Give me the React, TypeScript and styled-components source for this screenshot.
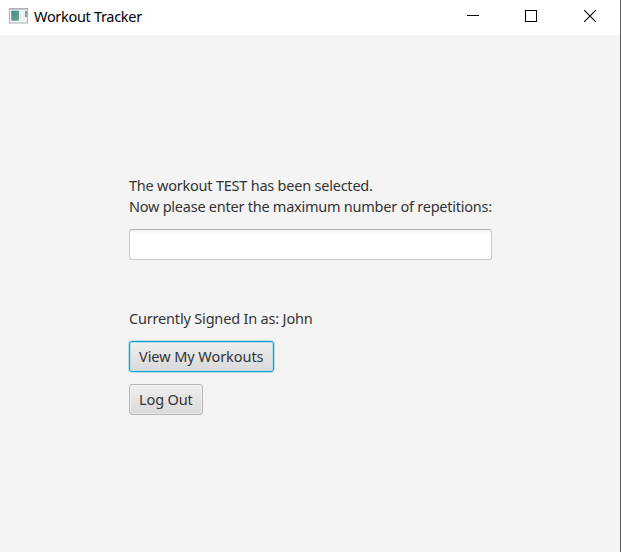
import React from "react";
import styled, { createGlobalStyle } from "styled-components";

const GlobalStyle = createGlobalStyle`
  * { box-sizing: border-box; }
  body { margin: 0; background: #f4f4f4; font-family: "Noto Sans", "Open Sans", sans-serif; }
`;

const Window = styled.div`
  width: 621px;
  height: 552px;
  display: flex;
  flex-direction: column;
  background: #f4f4f4;
  border-right: 1px solid #5b5b5b;
  overflow: hidden;
`;

const TitleBar = styled.header`
  height: 35px;
  flex: none;
  display: flex;
  align-items: stretch;
  background: #fff;
  padding-left: 9px;
`;

const AppIcon = styled.svg`
  width: 20px;
  height: 17px;
  margin: 7px 5px 0 0;
`;

const Title = styled.span<{ $spacing: number }>`
  flex: 1;
  font-size: 14.5px;
  line-height: 33px;
  color: #000;
  white-space: nowrap;
  letter-spacing: ${(p) => p.$spacing}px;
`;

const CaptionButton = styled.button`
  width: 58px;
  padding: 0;
  border: 0;
  background: transparent;
  display: flex;
  svg { width: 58px; height: 35px; display: block; }
`;

const Controls = styled.div`
  display: flex;
  width: 176px;
`;

const Content = styled.main`
  width: 363px;
  margin: 140px 0 0 129px;
  display: flex;
  flex-direction: column;
  align-items: flex-start;
`;

const Label = styled.div<{ $spacing: number }>`
  height: 21px;
  font-size: 14.5px;
  line-height: 21px;
  color: #333;
  white-space: nowrap;
  letter-spacing: ${(p) => p.$spacing}px;
`;

const TextField = styled.input`
  width: 363px;
  height: 31px;
  margin: 12px 0 48px;
  padding: 0 9px;
  border: 1px solid #c8c8c8;
  border-top-color: #b5b5b5;
  border-radius: 3px;
  background: linear-gradient(#f1f1f1, #fff 4px);
  outline: none;
  font: 14.5px "Noto Sans", sans-serif;
`;

const Button = styled.button<{ $focused?: boolean; $width: number; $spacing: number }>`
  width: ${(p) => p.$width}px;
  height: 31px;
  margin-top: 12px;
  padding: 0 0 0 9px;
  text-align: left;
  border: 1px solid ${(p) => (p.$focused ? "#159fc9" : "#b5b5b5")};
  border-radius: 3px;
  background: linear-gradient(#efefef, #d9d9d9);
  box-shadow: ${(p) =>
    p.$focused
      ? "0 0 0 1px rgba(3,158,211,.25), inset 0 0 0 1px #b5dfeb"
      : "inset 0 0 0 1px rgba(255,255,255,.4)"};
  color: #333;
  font: 14.5px/29px "Noto Sans", "Open Sans", sans-serif;
  letter-spacing: ${(p) => p.$spacing}px;
  white-space: nowrap;
`;

export default function App() {
  return (
    <>
      <GlobalStyle />
      <Window>
        <TitleBar>
          <AppIcon viewBox="0 0 20 17">
            <defs>
              <linearGradient id="pane" x1="0" y1="0" x2="1" y2="1">
                <stop offset="0" stopColor="#4b8095" />
                <stop offset="1" stopColor="#63b084" />
              </linearGradient>
            </defs>
            <rect x=".5" y="1.5" width="18" height="14.5" fill="#f3f5f7" stroke="#a9afb7" />
            <path d="M1 2.5h17" stroke="#c9cdd3" />
            <rect x="2.3" y="3.7" width="7.7" height="10" fill="url(#pane)" />
            <path d="M11.5 4v9" stroke="#e6eaec" />
            <path d="M16.9 4v6" stroke="#68a39a" strokeWidth="1.8" />
          </AppIcon>
          <Title $spacing={-0.31}>Workout Tracker</Title>
          <Controls>
            <CaptionButton aria-label="Minimize">
              <svg viewBox="0 0 58 35" shapeRendering="crispEdges">
                <path d="M23 15.5h12" stroke="#000" />
              </svg>
            </CaptionButton>
            <CaptionButton aria-label="Maximize">
              <svg viewBox="0 0 58 35" shapeRendering="crispEdges">
                <rect x="23.5" y="10.5" width="11" height="11" fill="none" stroke="#000" />
              </svg>
            </CaptionButton>
            <CaptionButton aria-label="Close">
              <svg viewBox="0 0 58 35">
                <path d="M24.2 10.2l11.6 11.6M35.8 10.2L24.2 21.8" stroke="#000" strokeWidth="1.1" />
              </svg>
            </CaptionButton>
          </Controls>
        </TitleBar>
        <Content>
          <Label $spacing={-0.225}>The workout TEST has been selected.</Label>
          <Label $spacing={-0.245}>Now please enter the maximum number of repetitions:</Label>
          <TextField aria-label="Maximum number of repetitions" />
          <Label $spacing={-0.18}>Currently Signed In as: John</Label>
          <Button $focused $width={145} $spacing={-0.06}>View My Workouts</Button>
          <Button $width={74} $spacing={-0.12}>Log Out</Button>
        </Content>
      </Window>
    </>
  );
}
